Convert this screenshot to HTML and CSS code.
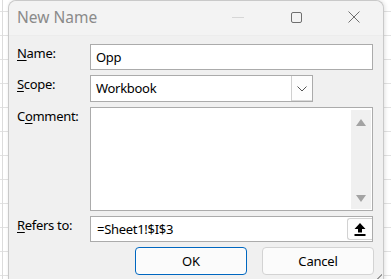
FILE: index.html
```html
<!DOCTYPE html>
<html lang="en">
  <head>
    <meta charset="utf-8">
    <title>New Name</title>
    <link rel="stylesheet" href="styles.css">
  </head>
  <body>
    <div class="dialog">
      <div class="titlebar">
        <span class="title">New Name</span>
        <span class="ctl ctl-min"><span class="dash"></span></span>
        <span class="ctl ctl-max"><span class="square"></span></span>
        <span class="ctl ctl-close">
          <svg width="12" height="12" viewBox="0 0 12 12"><path d="M0.5 0.5 L11.5 11.5 M11.5 0.5 L0.5 11.5" stroke="#6f6f6f" stroke-width="1"/></svg>
        </span>
      </div>
      <div class="form">
        <label class="label"><u>N</u>ame:</label>
        <div class="field">Opp</div>

        <label class="label"><u>S</u>cope:</label>
        <div class="combo">
          <span class="combo-text">Workbook</span>
          <span class="combo-btn">
            <svg width="10" height="6" viewBox="0 0 10 6"><path d="M0.5 0.5 L5 5 L9.5 0.5" fill="none" stroke="#555" stroke-width="1"/></svg>
          </span>
        </div>

        <label class="label">C<u>o</u>mment:</label>
        <div class="memo">
          <div class="memo-text"></div>
          <div class="scrollbar">
            <svg width="10" height="7" viewBox="0 0 10 7"><path d="M5 0 L10 7 L0 7 Z" fill="#a3a3a3"/></svg>
            <svg width="10" height="7" viewBox="0 0 10 7"><path d="M0 0 L10 0 L5 7 Z" fill="#a3a3a3"/></svg>
          </div>
        </div>

        <label class="label"><u>R</u>efers to:</label>
        <div class="field field-ref">
          <span class="ref-text">=Sheet1!$I$3</span>
          <span class="ref-btn">
            <svg width="12" height="13" viewBox="0 0 12 13"><path d="M6 0 L11.5 6 L8 6 L8 9.5 L4 9.5 L4 6 L0.5 6 Z" fill="#000"/><rect x="0.5" y="11" width="11" height="2" fill="#000"/></svg>
          </span>
        </div>

        <div class="actions">
          <button class="btn btn-default">OK</button>
          <button class="btn">Cancel</button>
        </div>
      </div>
      <span class="grip"></span>
    </div>
  </body>
</html>
```

FILE: styles.css
```css
* {
  box-sizing: border-box;
  margin: 0;
  padding: 0;
}

html, body {
  width: 100%;
  height: 100%;
}

body {
  background-color: #fff;
  background-image:
    linear-gradient(to right, #dcdcdc 1px, transparent 1px),
    repeating-linear-gradient(to bottom, transparent 0, transparent 11px, #e2e2e2 11px, #e2e2e2 12px, transparent 12px, transparent 24px);
  background-size: 100% 100%, 100% 100%;
  background-position: 2px 0, 0 0;
  background-repeat: no-repeat, repeat;
  overflow: hidden;
  font-family: "Noto Sans", "Open Sans", sans-serif;
  font-size: 13px;
  letter-spacing: -0.3px;
  color: #000;
}

.dialog {
  position: relative;
  margin-left: 8px;
  width: 376px;
  height: 284px;
  background: #f0f0f0;
  border: 1px solid #c9c9c9;
  border-bottom: none;
  border-radius: 8px 8px 0 0;
  box-shadow: 1px 0 4px rgba(0, 0, 0, 0.12);
}

.titlebar {
  display: flex;
  align-items: center;
  height: 35px;
  background: #f3f3f3;
  border-radius: 8px 8px 0 0;
  border-bottom: 1px solid #ececec;
}

.title {
  flex: 1;
  padding-left: 8px;
  padding-bottom: 2px;
  font-size: 15.5px;
  letter-spacing: 0;
  color: #8a8a8a;
}

.ctl {
  width: 58px;
  height: 34px;
  display: flex;
  align-items: center;
  justify-content: center;
}

.ctl-min {
  padding-bottom: 2px;
}

.dash {
  width: 12px;
  height: 1px;
  background: #d6d6d6;
}

.square {
  width: 11px;
  height: 11px;
  border: 1px solid #6f6f6f;
  border-radius: 2px;
  margin-top: -2px;
}

.ctl-close {
  margin-top: -2px;
}

.form {
  display: grid;
  grid-template-columns: 73px 1fr;
  grid-template-rows: 26px 27px 104px 26px 28px;
  row-gap: 5px;
  padding: 8px 10px 0 8px;
}

.label {
  line-height: 18px;
}

.label u {
  text-underline-offset: 2px;
}

.field {
  background: #fff;
  border: 1px solid #ababab;
  padding: 0 5px;
  line-height: 24px;
}

.combo {
  display: flex;
  width: 223px;
  background: #fff;
  border: 1px solid #ababab;
}

.combo-text {
  flex: 1;
  padding: 0 5px;
  line-height: 25px;
}

.combo-btn {
  width: 21px;
  display: flex;
  align-items: center;
  justify-content: center;
  background: #fdfdfd;
  border-left: 1px solid #cfcfcf;
  box-shadow: inset 0 -1px 0 #dadada;
}

.memo {
  display: flex;
  background: #fff;
  border: 1px solid #ababab;
  padding: 2px 1px 1px 0;
}

.memo-text {
  flex: 1;
}

.scrollbar {
  width: 20px;
  background: #f0f0f0;
  display: flex;
  flex-direction: column;
  align-items: center;
  justify-content: space-between;
  padding: 9px 0 7px;
}

.field-ref {
  display: flex;
  align-items: center;
  padding: 0 0 0 6px;
}

.ref-text {
  flex: 1;
}

.ref-btn {
  width: 25px;
  height: 22px;
  display: flex;
  align-items: center;
  justify-content: center;
  background: #fdfdfd;
  border: 1px solid #d2d2d2;
  border-right: none;
  border-radius: 3px 0 0 3px;
}

.actions {
  grid-column: 1 / -1;
  display: flex;
  justify-content: flex-end;
  gap: 15px;
  margin-right: -1px;
}

.btn {
  width: 112px;
  height: 28px;
  font-family: "Noto Sans", "Open Sans", sans-serif;
  font-size: 13px;
  letter-spacing: -0.2px;
  color: #000;
  background: #fbfbfb;
  border: 1px solid #d3d3d3;
  border-radius: 4px;
}

.btn-default {
  border: 1px solid #0067c0;
  box-shadow: inset 0 0 0 1px #fdfdfd;
}

.grip {
  position: absolute;
  right: 1px;
  bottom: 4px;
  width: 6px;
  height: 6px;
  background: linear-gradient(135deg, transparent 50%, #9a9a9a 50%, #9a9a9a 65%, transparent 65%);
}
```
